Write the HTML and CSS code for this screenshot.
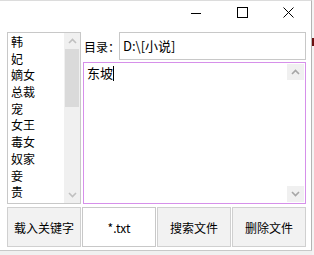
FILE: index.html
```html
<!DOCTYPE html>
<html lang="zh">
<head>
  <meta charset="UTF-8">
  <title>关键字</title>
  <link rel="stylesheet" href="styles.css">
</head>
<body>
  <div class="desk">
    <div class="window">
      <div class="titlebar">
        <span class="tbtn">
          <svg width="10" height="10" viewBox="0 0 10 10"><path d="M0 5.5H10" stroke="#000" stroke-width="1"/></svg>
        </span>
        <span class="tbtn">
          <svg width="11" height="11" viewBox="0 0 11 11"><rect x="0.5" y="0.5" width="10" height="10" fill="none" stroke="#000" stroke-width="1"/></svg>
        </span>
        <span class="tbtn">
          <svg width="11" height="11" viewBox="0 0 11 11"><path d="M0.5 0.5L10.5 10.5M10.5 0.5L0.5 10.5" stroke="#000" stroke-width="1"/></svg>
        </span>
      </div>

      <div class="content">
        <div class="listbox">
          <ul class="words">
            <li>韩</li>
            <li>妃</li>
            <li>嫡女</li>
            <li>总裁</li>
            <li>宠</li>
            <li>女王</li>
            <li>毒女</li>
            <li>奴家</li>
            <li>妾</li>
            <li>贵</li>
          </ul>
          <div class="vscroll">
            <span class="arrow"><svg width="9" height="6" viewBox="0 0 9 6"><path d="M1 5L4.5 1.5L8 5" fill="none" stroke="#c0c0c0" stroke-width="1.6"/></svg></span>
            <span class="thumb"></span>
            <span class="track"></span>
            <span class="arrow"><svg width="9" height="6" viewBox="0 0 9 6"><path d="M1 1L4.5 4.5L8 1" fill="none" stroke="#c0c0c0" stroke-width="1.6"/></svg></span>
          </div>
        </div>

        <div class="panel">
          <div class="dir-row">
            <span class="dir-label">目录：</span>
            <div class="dir-input">D:\[小说]</div>
          </div>
          <div class="editor">
            <div class="editor-text">东坡<span class="caret"></span></div>
            <div class="editor-scroll">
              <span class="sbox"><svg width="9" height="6" viewBox="0 0 9 6"><path d="M1 5L4.5 1.5L8 5" fill="none" stroke="#a6a6a6" stroke-width="1.6"/></svg></span>
              <span class="sbox"><svg width="9" height="6" viewBox="0 0 9 6"><path d="M1 1L4.5 4.5L8 1" fill="none" stroke="#a6a6a6" stroke-width="1.6"/></svg></span>
            </div>
          </div>
        </div>
      </div>

      <div class="buttons">
        <div class="btn">载入关键字</div>
        <div class="btn white">*.txt</div>
        <div class="btn">搜索文件</div>
        <div class="btn">删除文件</div>
      </div>
    </div>
    <div class="side">
      <span class="mark"></span>
    </div>
  </div>
</body>
</html>
```

FILE: styles.css
```css
body {
  margin: 0;
  background: #f0f0f0;
  font-family: "Noto Sans CJK SC", "Liberation Sans", sans-serif;
  font-size: 12px;
  color: #000;
}

.desk {
  display: flex;
  width: 314px;
  height: 255px;
  overflow: hidden;
}

.window {
  width: 312px;
  height: 251px;
  box-sizing: border-box;
  background: #fff;
  border-top: 1px solid #dcdcdc;
  border-right: 1px solid #b4b4b4;
  border-bottom: 1px solid #c8c8c8;
  flex-shrink: 0;
}

.side {
  width: 2px;
  background: #f4f4f4;
  padding-top: 38px;
}

.mark {
  display: block;
  width: 2px;
  height: 8px;
  background: #6b0f0f;
}

/* title bar */
.titlebar {
  display: flex;
  justify-content: flex-end;
  height: 31px;
}

.tbtn {
  width: 46px;
  height: 23px;
  display: flex;
  align-items: center;
  justify-content: center;
}

/* middle */
.content {
  display: flex;
  gap: 2px;
  padding: 0 5px 0 7px;
  height: 172px;
}

.listbox {
  width: 74px;
  box-sizing: border-box;
  border: 1px solid #c8c8c8;
  display: flex;
}

.words {
  list-style: none;
  margin: 0;
  padding: 1px 0 0 3px;
  flex: 1;
}

.words li {
  height: 16.7px;
  line-height: 16.7px;
}

.vscroll {
  width: 16px;
  background: #f0f0f0;
  display: flex;
  flex-direction: column;
}

.vscroll .arrow {
  height: 16px;
  display: flex;
  align-items: center;
  justify-content: center;
}

.vscroll .thumb {
  height: 58px;
  margin: 0 1px;
  background: #dadada;
}

.vscroll .track {
  flex: 1;
}

.panel {
  flex: 1;
  display: flex;
  flex-direction: column;
  gap: 2px;
}

.dir-row {
  display: flex;
  align-items: center;
  height: 28px;
}

.dir-label {
  flex: none;
  width: 35px;
  padding-left: 1px;
  white-space: nowrap;
}

.dir-input {
  flex: 1;
  height: 28px;
  box-sizing: border-box;
  border: 1px solid #c8c8c8;
  padding-left: 3px;
  line-height: 25px;
  font-size: 13px;
}

.editor {
  flex: 1;
  border: 1px solid #d690ea;
  display: flex;
}

.editor-text {
  flex: 1;
  padding: 1px 0 0 3px;
  line-height: 18px;
  font-size: 13px;
}

.caret {
  display: inline-block;
  width: 1px;
  height: 15px;
  background: #000;
  vertical-align: -3px;
}

.editor-scroll {
  width: 17px;
  display: flex;
  flex-direction: column;
  justify-content: space-between;
  padding: 1px 1px 1px 0;
}

.sbox {
  height: 16px;
  background: #f0f0f0;
  display: flex;
  align-items: center;
  justify-content: center;
}

/* bottom buttons */
.buttons {
  display: grid;
  grid-template-columns: repeat(4, 1fr);
  gap: 1px;
  padding: 3px 5px 0 7px;
}

.btn {
  height: 40px;
  box-sizing: border-box;
  border: 1px solid #d0d0d0;
  background: #f2f2f2;
  display: flex;
  align-items: center;
  justify-content: center;
}

.btn.white {
  background: #fff;
  border-color: #c8c8c8;
}
```
